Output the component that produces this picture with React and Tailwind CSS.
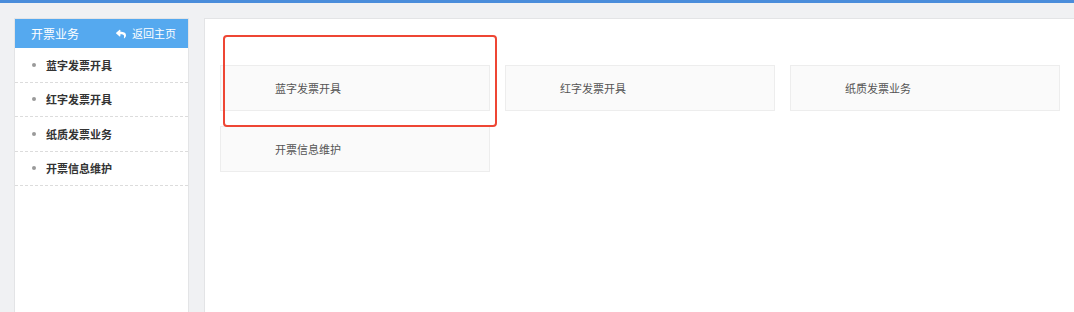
import React from 'react'
import { FaReply } from 'react-icons/fa'

const menus = ['蓝字发票开具', '红字发票开具', '纸质发票业务', '开票信息维护']
const cards = ['蓝字发票开具', '红字发票开具', '纸质发票业务', '开票信息维护']

const font = { fontFamily: '"Noto Sans CJK SC", "Liberation Sans", sans-serif' }

const Sidebar = () => {
  return (
    <div className="w-[175px] shrink-0 bg-white border border-[#e3e4e6] border-b-0 flex flex-col">
      <div className="h-[29px] bg-[#55a9ef] flex items-center justify-between pl-[16px] pr-[12px] text-white">
        <p className="text-[12px] leading-none">开票业务</p>
        <div className="flex items-center gap-[6px] text-[11px] leading-none">
          <FaReply className="text-[10px]" />
          <span>返回主页</span>
        </div>
      </div>
      {menus.map((m, i) => (
        <div key={i} className="h-[34.5px] flex items-center border-b border-dashed border-[#dcdcdc] pl-[17px] gap-[10px]">
          <span className="w-[4px] h-[4px] rounded-full bg-[#9a9a9a]" />
          <p className="text-[11px] font-bold text-[#333]">{m}</p>
        </div>
      ))}
    </div>
  )
}

const App = () => {
  return (
    <div className="h-screen overflow-hidden bg-[#f0f1f3] flex flex-col" style={font}>
      <div className="h-[3px] bg-[#4a8ddb] shrink-0" />
      <div className="flex flex-1 gap-[15px] pl-[14px] pt-[15px]">
        <Sidebar />
        <div className="flex-1 bg-white border border-[#e3e4e6] border-r-0 border-b-0 relative pl-[15px] pr-[14px] pt-[46px]">
          <div className="grid grid-cols-[270px_270px_270px] gap-x-[15px] gap-y-[15px]">
            {cards.map((c, i) => (
              <div key={i} className="h-[46px] bg-[#fafafa] border border-[#ededed] flex items-center pl-[54px]">
                <p className="text-[11px] text-[#555]">{c}</p>
              </div>
            ))}
          </div>
          <div className="absolute left-[18px] top-[16px] w-[274px] h-[92px] border-2 border-[#ee4634] rounded-[4px]" />
        </div>
      </div>
    </div>
  )
}

export default App
